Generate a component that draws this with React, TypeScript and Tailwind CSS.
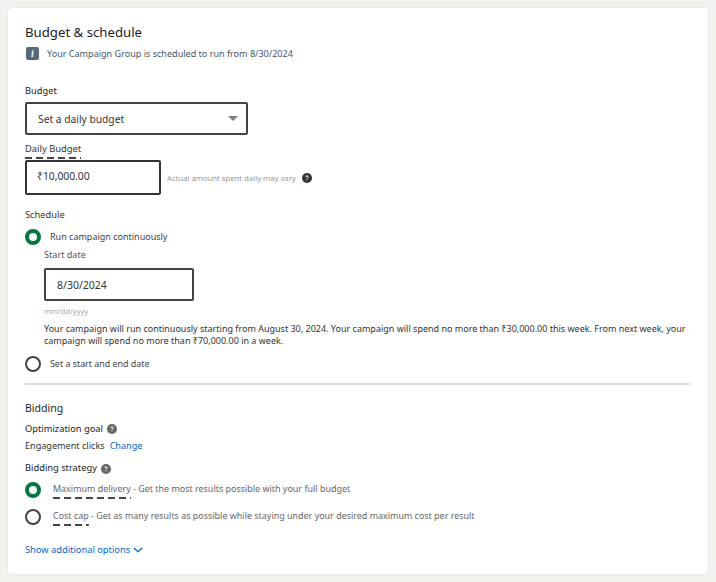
const Help = ({ className = "" }: { className?: string }) => (
  <svg viewBox="0 0 16 16" className={`w-[10px] h-[10px] shrink-0 ${className}`}>
    <circle cx="8" cy="8" r="8" fill="currentColor" />
    <path d="M5.4 6.2C5.5 4.7 6.6 4 8 4c1.5 0 2.6.8 2.6 2.1 0 1-.6 1.5-1.3 2-.6.4-.8.7-.8 1.3H7.3c0-1 .3-1.5 1-2 .6-.4.9-.7.9-1.2 0-.6-.5-.9-1.2-.9s-1.2.4-1.3 1H5.4z" fill="#fff" />
    <rect x="7.2" y="10.4" width="1.5" height="1.6" fill="#fff" />
  </svg>
);

const Radio = ({ on = false }: { on?: boolean }) => (
  <span
    className={`block w-4 h-4 rounded-full bg-white shrink-0 ${
      on ? "border-[4px] border-[#057642]" : "border-2 border-[#444444]"
    }`}
  />
);

const Dashed = ({ children }: { children: React.ReactNode }) => (
  <span className="inline-block pb-[4px] bg-[repeating-linear-gradient(90deg,#444444_0,#444444_7px,transparent_7px,transparent_11px)] bg-bottom bg-no-repeat bg-[length:100%_2px]">
    {children}
  </span>
);

export default function App() {
  return (
    <div className="w-[716px] h-[582px] bg-[#f3f2ef] p-2 font-['Noto_Sans','Open_Sans',sans-serif] text-[9.1px] leading-[12px] text-[#333333] overflow-hidden">
      <div className="h-[566px] bg-white rounded-[4px] pl-[17px] pr-[18px] pt-[16px] shadow-[0_0_0_1px_rgba(0,0,0,0.03)]">
        <h2 className="text-[13.2px] leading-[17px] text-[#1d1d1d]">Budget &amp; schedule</h2>

        <div className="flex items-center gap-[8px] mt-[6px] ml-[1px] text-[#46556b] text-[9.05px]">
          <span className="w-[13px] h-[13px] rounded-[2px] bg-[#56687a] text-white flex items-center justify-center font-['Liberation_Serif',serif] italic font-bold text-[10px] leading-none">i</span>
          <span>Your Campaign Group is scheduled to run from 8/30/2024</span>
        </div>

        <div className="mt-[25px] text-[9.3px] text-[#222222]">Budget</div>
        <div className="mt-[5px] w-[223px] h-[33px] border-2 border-[#444444] rounded-[2px] flex items-center justify-between pl-[11px] pr-[8px] text-[10.25px]">
          <span>Set a daily budget</span>
          <span className="w-0 h-0 border-x-[5px] border-x-transparent border-t-[5px] border-t-[#7f7f7f]" />
        </div>

        <div className="mt-[8px] text-[9.4px] h-[16px]"><Dashed>Daily Budget</Dashed></div>
        <div className="mt-[1px] flex items-center">
          <div className="w-[136px] h-[35px] border-2 border-[#333333] rounded-[2px] flex items-center pl-[10px] pb-[3px] text-[10.3px]">₹10,000.00</div>
          <span className="ml-[6px] text-[7.7px] text-[#999999]">Actual amount spent daily may vary</span>
          <Help className="ml-[6px] text-[#333333]" />
        </div>

        <div className="mt-[14px] text-[9.3px] text-[#333333]">Schedule</div>
        <div className="mt-[8px] flex items-center gap-[9px]">
          <Radio on />
          <span className="text-[9px] text-[#444444]">Run campaign continuously</span>
        </div>
        <div className="ml-[19px]">
          <div className="mt-[4px] text-[#555555]">Start date</div>
          <div className="mt-[7px] w-[150px] h-[33px] border-2 border-[#444444] rounded-[2px] flex items-center pl-[11px] text-[10.5px]">8/30/2024</div>
          <div className="mt-[4px] text-[7.5px] text-[#aaaaaa]">mm/dd/yyyy</div>
          <p className="mt-[6px] text-[#333333] text-[9px] leading-[12px]">
            Your campaign will run continuously starting from August 30, 2024. Your campaign will spend no more than ₹30,000.00 this week. From next week, your campaign will spend no more than ₹70,000.00 in a week.
          </p>
        </div>
        <div className="mt-[9px] flex items-center gap-[9px]">
          <Radio />
          <span className="text-[8.9px] text-[#444444]">Set a start and end date</span>
        </div>

        <div className="mt-[11px] h-[2px] bg-[#dddddd]" />

        <div className="mt-[17px] text-[10.5px] text-[#222222]">Bidding</div>
        <div className="mt-[9px] flex items-center gap-[4px] text-[9.3px] text-[#222222]">
          <span>Optimization goal</span>
          <Help className="text-[#666666]" />
        </div>
        <div className="mt-[5px] flex gap-[5px] text-[#333333]">
          <span>Engagement clicks</span>
          <span className="text-[#0a66c2]">Change</span>
        </div>
        <div className="mt-[9px] flex items-center gap-[4px] text-[9.3px] text-[#222222]">
          <span>Bidding strategy</span>
          <Help className="text-[#666666] mt-[3px]" />
        </div>
        <div className="mt-[8px] flex items-start gap-[12px] text-[8.95px] text-[#666666] h-[18px]">
          <Radio on />
          <span className="pt-[1px]"><Dashed>Maximum delivery</Dashed> - Get the most results possible with your full budget</span>
        </div>
        <div className="mt-[9px] flex items-start gap-[12px] text-[8.95px] text-[#666666] h-[18px]">
          <Radio />
          <span className="pt-[1px]"><Dashed>Cost cap</Dashed> - Get as many results as possible while staying under your desired maximum cost per result</span>
        </div>
        <div className="mt-[17px] flex items-center gap-[3px] text-[9.3px] text-[#0a66c2]">
          <span>Show additional options</span>
          <svg viewBox="0 0 12 7" className="w-[10px] h-[6px]" fill="none" stroke="currentColor" strokeWidth="1.6"><path d="M1 1l5 4.5L11 1" /></svg>
        </div>
      </div>
    </div>
  );
}
